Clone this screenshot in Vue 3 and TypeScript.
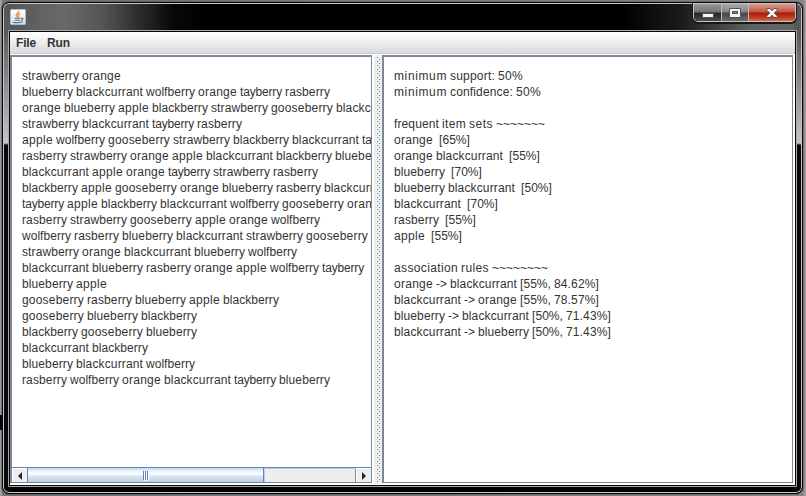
<script setup lang="ts">
const menus: string[] = ['File', 'Run']

const transactions: string[] = [
  'strawberry orange',
  'blueberry blackcurrant wolfberry orange tayberry rasberry',
  'orange blueberry apple blackberry strawberry gooseberry blackcurrant',
  'strawberry blackcurrant tayberry rasberry',
  'apple wolfberry gooseberry strawberry blackberry blackcurrant tayberry',
  'rasberry strawberry orange apple blackcurrant blackberry blueberry',
  'blackcurrant apple orange tayberry strawberry rasberry',
  'blackberry apple gooseberry orange blueberry rasberry blackcurrant',
  'tayberry apple blackberry blackcurrant wolfberry gooseberry orange',
  'rasberry strawberry gooseberry apple orange wolfberry',
  'wolfberry rasberry blueberry blackcurrant strawberry gooseberry',
  'strawberry orange blackcurrant blueberry wolfberry',
  'blackcurrant blueberry rasberry orange apple wolfberry tayberry',
  'blueberry apple',
  'gooseberry rasberry blueberry apple blackberry',
  'gooseberry blueberry blackberry',
  'blackberry gooseberry blueberry',
  'blackcurrant blackberry',
  'blueberry blackcurrant wolfberry',
  'rasberry wolfberry orange blackcurrant tayberry blueberry',
]

const results: string[] = [
  'minimum support: 50%',
  'minimum confidence: 50%',
  '',
  'frequent item sets ~~~~~~~',
  'orange  [65%]',
  'orange blackcurrant  [55%]',
  'blueberry  [70%]',
  'blueberry blackcurrant  [50%]',
  'blackcurrant  [70%]',
  'rasberry  [55%]',
  'apple  [55%]',
  '',
  'association rules ~~~~~~~~',
  'orange -> blackcurrant [55%, 84.62%]',
  'blackcurrant -> orange [55%, 78.57%]',
  'blueberry -> blackcurrant [50%, 71.43%]',
  'blackcurrant -> blueberry [50%, 71.43%]',
]

const groups: [string, number, number][] = [
  ['abdeghnopqu0123456789', 6.674, 7],
  ['ck', 6, 6],
  ['s', 6, 7],
  ['y', 6, 5],
  ['r', 3.996, 4],
  ['il', 2.666, 3],
  ['t.,:f[] ', 3.334, 3],
  ['w', 8.666, 9],
  ['m', 9.996, 11],
  ['%', 10.67, 11],
  ['>~', 7.008, 7],
  ['-', 3.996, 4],
]

interface Word { text: string; spacing: string }

function words(line: string): Word[] {
  return (line.match(/\S+|\s+/g) ?? []).map((text) => {
    let delta = 0
    for (const ch of text) {
      const group = groups.find(([chars]) => chars.includes(ch))
      if (group) delta += group[2] - group[1]
    }
    return { text, spacing: `${(delta / text.length).toFixed(4)}px` }
  })
}

const panes = { left: transactions.map(words), right: results.map(words) }
</script>

<template>
  <div class="desktop">
    <div class="window">
      <header class="titlebar">
        <svg class="java" width="16" height="16" viewBox="0 0 16 16">
          <defs>
            <linearGradient id="tile" x2="0" y2="1">
              <stop offset="0" stop-color="#fff" />
              <stop offset="1" stop-color="#d3dce4" />
            </linearGradient>
          </defs>
          <rect x=".5" y=".5" width="15" height="15" rx="1" fill="url(#tile)" stroke="#b0bcc7" />
          <path d="M8.7 1.8C9.4 3.8 5.5 4.5 6.2 6.2L7.7 8.4M10.3 4.3C8.6 5 7.6 5.8 8.5 6.8L8.2 8.3" fill="none" stroke="#ed8b2c" stroke-width="1.3" />
          <path d="M4.5 9.2H10.5M5 11.2H10.2M3 13.1Q8 14.6 12.8 12.8M11 9.3C14 8.6 13.3 11.2 11 11.4" fill="none" stroke="#50758f" stroke-width="1.1" />
        </svg>
        <div class="controls">
          <span class="control min">
            <svg width="12" height="5" viewBox="0 0 12 5"><rect x=".5" y=".5" width="11" height="4" rx=".5" fill="#f5f5f5" stroke="#50505f" /></svg>
          </span>
          <span class="control max">
            <svg width="12" height="10" viewBox="0 0 12 10">
              <rect x=".5" y=".5" width="11" height="9" rx=".5" fill="#f5f5f5" stroke="#50505f" />
              <rect x="3.5" y="3.5" width="5" height="2" fill="#85858c" stroke="#50505f" />
            </svg>
          </span>
          <span class="control close">
            <svg width="12" height="10" viewBox="0 0 12 10">
              <path d="M.7.5H4L6 2.8 8 .5H11.3V2L8.3 5 11.3 8V9.5H8L6 7.2 4 9.5H.7V8L3.7 5 .7 2Z" fill="#f5f5f5" stroke="#58505e" />
            </svg>
          </span>
        </div>
      </header>
      <main class="client">
        <nav class="menubar">
          <span v-for="menu in menus" :key="menu">{{ menu }}</span>
        </nav>
        <section class="split">
          <div class="pane left">
            <div class="text">
              <div v-for="(line, i) in panes.left" :key="i" class="line"><span v-for="(w, j) in line" :key="j" :style="{ letterSpacing: w.spacing }">{{ w.text }}</span></div>
            </div>
            <div class="scrollbar">
              <span class="arrow back"><svg width="4" height="8" viewBox="0 0 4 8"><path d="M4 0V8L0 4Z" fill="#222" /></svg></span>
              <span class="thumb"><i /><i /><i /></span>
              <span class="track" />
              <span class="arrow next"><svg width="4" height="8" viewBox="0 0 4 8"><path d="M0 0V8L4 4Z" fill="#222" /></svg></span>
            </div>
          </div>
          <div class="divider"><span /></div>
          <div class="pane right">
            <div class="text">
              <div v-for="(line, i) in panes.right" :key="i" class="line"><span v-for="(w, j) in line" :key="j" :style="{ letterSpacing: w.spacing }">{{ w.text }}</span></div>
            </div>
          </div>
        </section>
      </main>
    </div>
  </div>
</template>

<style>
body { overflow: hidden; }
</style>

<style scoped>
* { box-sizing: border-box; }
.desktop {
  width: 806px;
  height: 496px;
  padding: 2px 3px 2px 2px;
  background:
    linear-gradient(#000, #000) 0 415px / 2px 15px no-repeat,
    linear-gradient(90deg, #aaa, #777 3px, #888 803px, #aaa4a2);
  font-family: "Liberation Sans", Arial, sans-serif;
  color: #333;
}
.window {
  height: 492px;
  border: 1px solid #090909;
  border-radius: 7px;
  padding: 0 5px 5px 5px;
  background:
    linear-gradient(#555 0, #5a5a5a 30px, #c5c5c5 140px, #777 141px, #080808 142px) 0 0 / 8px 100% no-repeat,
    linear-gradient(#555 0, #5a5a5a 30px, #c5c5c5 140px, #777 141px, #080808 142px) 100% 0 / 8px 100% no-repeat,
    linear-gradient(90deg, #555, #696969 60px, #555 100px, #333 130px, #080808 170px, #000 200px, #000 620px, #1c1c1c 680px, #606060 745px, #666) 0 0 / 100% 30px no-repeat,
    #030303;
  box-shadow: inset 0 0 0 1px #c5c5c5, 0 0 2px #222;
}
.titlebar {
  display: flex;
  justify-content: space-between;
  height: 27px;
  padding: 0 1px 0 2px;
}
.java { margin-top: 6px; }
.controls {
  display: flex;
  width: 103px;
  height: 19px;
  border: 1px solid #c4c4c4;
  border-radius: 0 0 5px 5px;
  overflow: hidden;
  box-shadow: 0 1px 0 1px #181818;
}
.control {
  display: flex;
  align-items: center;
  justify-content: center;
  background: linear-gradient(#999 0, #737373 8px, #242424 9px, #505058 18px);
}
.min { width: 28px; border-right: 1px solid #bbb; padding-top: 6px; }
.max { width: 27px; border-right: 1px solid #bbb; background: linear-gradient(#aaa 0, #858585 8px, #484848 9px, #707074 18px); }
.close { width: 46px; background: linear-gradient(#dc9b8e 0, #c35443 8px, #aa1d05 9px, #c33f24 14px, #d88165 18px); }
.client {
  height: 457px;
  border: 1px solid #aaa;
  border-radius: 1px;
  width: 789px;
  background: #fff;
  padding: 1px;
  box-shadow: inset 0 0 0 1px #080808;
}
.menubar {
  display: flex;
  gap: 11px;
  height: 22px;
  padding-left: 6px;
  font-size: 12px;
  font-weight: 700;
  letter-spacing: -.15px;
  line-height: 22px;
  background: linear-gradient(#fff, #dadada);
  border-bottom: 1px solid #ccc;
}
.split {
  display: flex;
  height: 430px;
  padding-top: 1px;
  background: #fff;
}
.pane {
  height: 428px;
  border: 1px solid #7a8a99;
  border-width: 2px 1px 1px 2px;
  background: #fff;
  overflow: hidden;
}
.left { width: 362px; }
.right { width: 411px; }
.text {
  padding: 11px 0 0 10px;
  font-size: 12px;
  font-kerning: none;
  line-height: 16px;
  white-space: pre;
}
.left .text { height: 410px; overflow: hidden; }
.line { height: 16px; }
.scrollbar {
  display: flex;
  height: 15px;
  border-top: 1px solid #6382bf;
  background: #eee;
}
.arrow {
  display: flex;
  align-items: center;
  justify-content: center;
  width: 15px;
  border: 1px solid #fff;
  border-width: 1px 0 0 1px;
}
.thumb {
  display: flex;
  align-items: center;
  justify-content: center;
  gap: 1px;
  width: 237px;
  border-left: 1px solid #6382bf;
  border-right: 1px solid #6382bf;
  background: linear-gradient(#c5d8eb 0, #e8f1f8 3px, #fff 6px, #dce8f3 8px, #b8cfe5);
}
.thumb i { width: 1px; height: 9px; background: #6382bf; box-shadow: 1px 1px #fff; }
.track { width: 91px; border-top: 1px solid #b8cfe5; border-left: 1px solid #b8cfe5; }
.next { width: 16px; border-left: 1px solid #7a8a99; box-shadow: inset 1px 0 #fff; }
.divider {
  width: 10px;
  height: 429px;
  padding-left: 2px;
  background: linear-gradient(90deg, #fff 2px, #eee 2px);
}
.divider span {
  display: block;
  height: 425px;
  margin-top: 2px;
  background:
    radial-gradient(circle at 3.5px .5px, #6a7682 .7px, transparent .71px) 0 0 / 8px 4px,
    radial-gradient(circle at 5.5px 2.5px, #6a7682 .7px, transparent .71px) 0 0 / 8px 4px,
    radial-gradient(circle at 2.5px 3.5px, #fff .7px, transparent .71px) 0 0 / 8px 4px,
    radial-gradient(circle at 4.5px 1.5px, #fff .7px, transparent .71px) 0 0 / 8px 4px;
}
</style>
